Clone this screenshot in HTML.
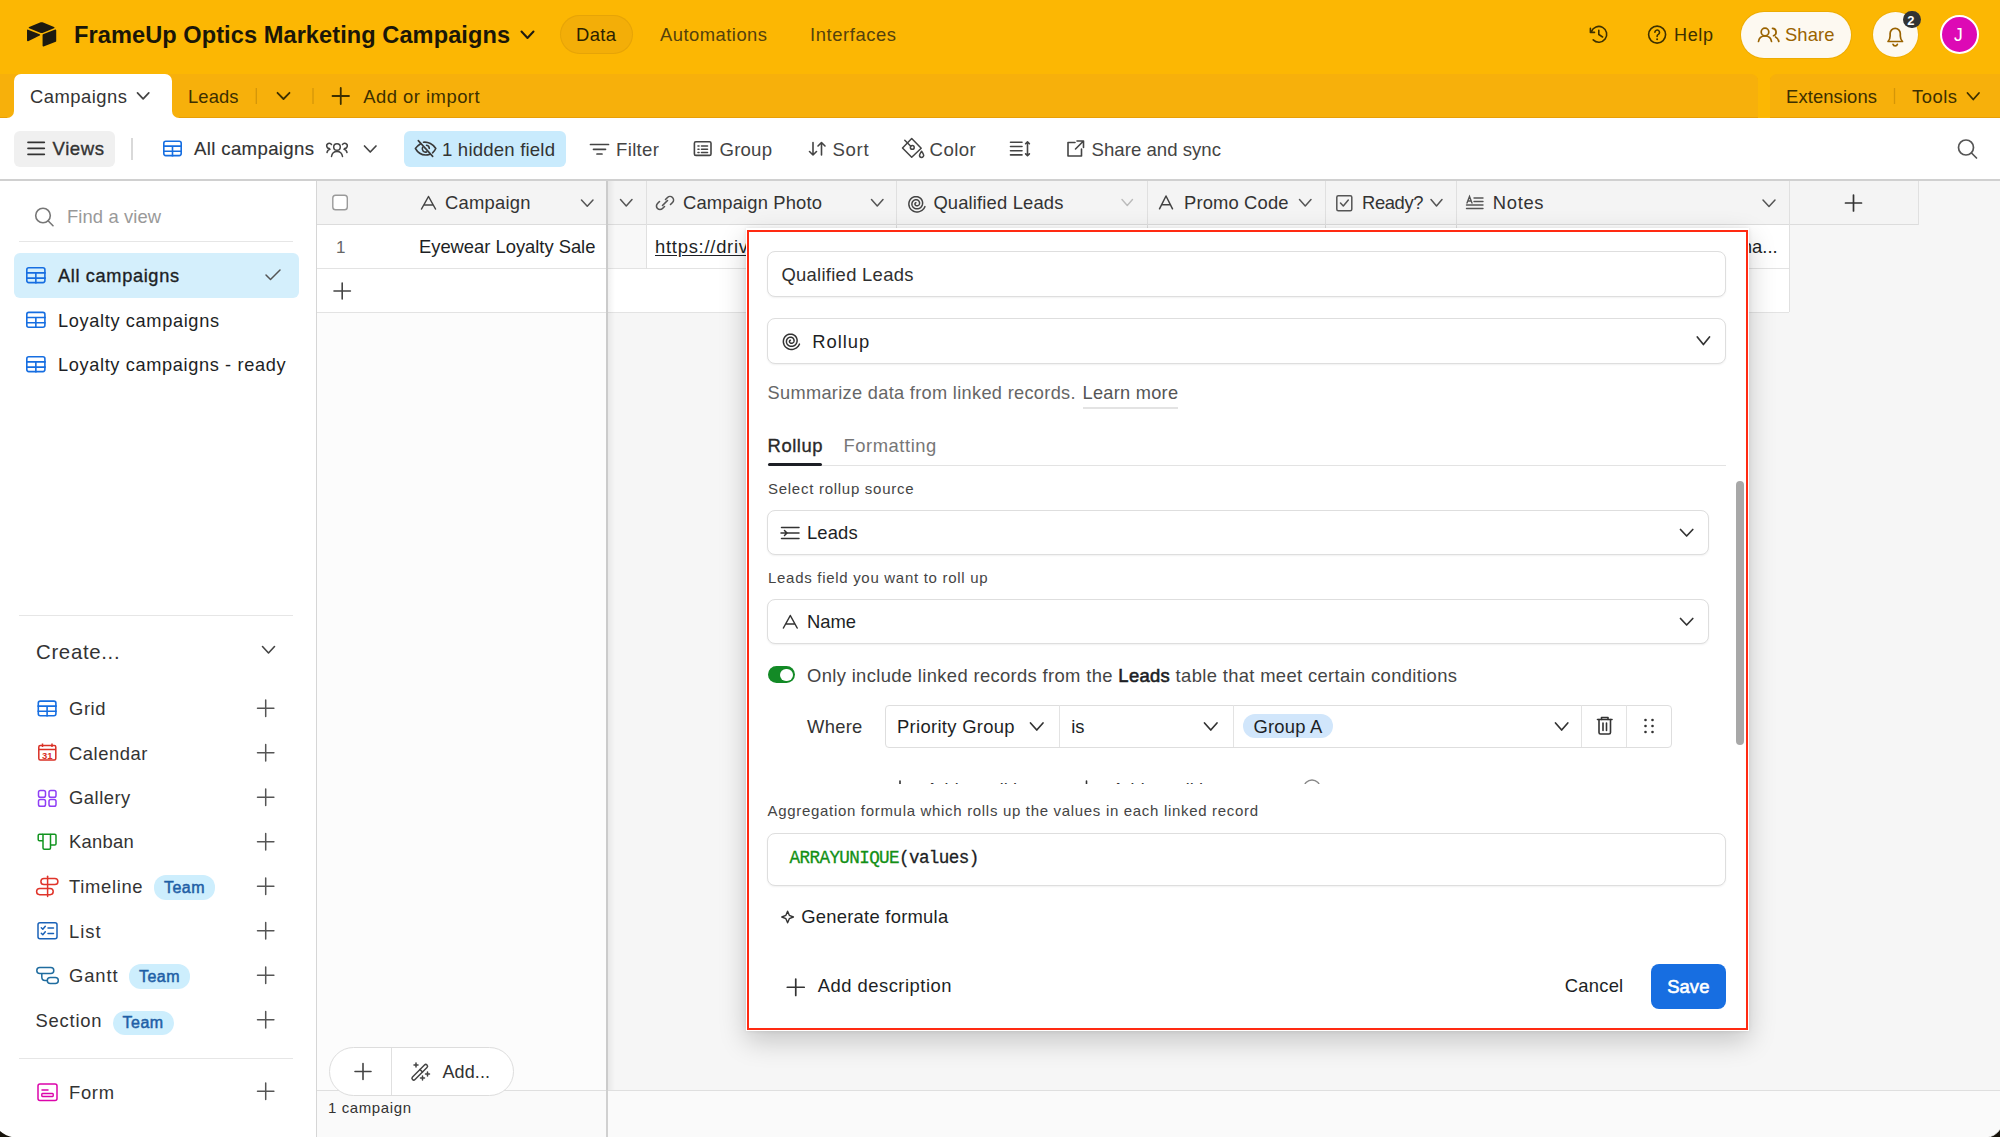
<!DOCTYPE html>
<html><head><meta charset="utf-8">
<style>
*{box-sizing:border-box;margin:0;padding:0}
html,body{width:2000px;height:1137px;overflow:hidden;background:#fff;font-family:"Liberation Sans",sans-serif;color:#1d1f25}
.a{position:absolute;white-space:nowrap}
svg.full{position:absolute;left:0;top:0;overflow:visible}

</style></head><body>
<div class="a" style="left:0px;top:0px;width:2000px;height:118px;background:#fcb703"></div>
<div class="a" style="left:0px;top:74px;width:1758px;height:44px;background:#f7b00b;border-radius:0 7px 0 0;box-shadow:inset 0 -1px 0 rgba(200,130,0,0.35)"></div>
<div class="a" style="left:1770px;top:74px;width:230px;height:44px;background:#f7b00b;border-radius:7px 0 0 0;box-shadow:inset 0 -1px 0 rgba(200,130,0,0.35)"></div>
<div class="a" style="left:7px;top:111px;width:172px;height:7px;background:#fff"></div>
<div class="a" style="left:7px;top:104px;width:7px;height:14px;background:#f7b00b;border-radius:0 0 7px 0"></div>
<div class="a" style="left:172px;top:104px;width:7px;height:14px;background:#f7b00b;border-radius:0 0 0 7px"></div>
<div class="a" style="left:14px;top:74px;width:158px;height:44px;background:#fff;border-radius:7px 7px 0 0"></div>
<div class="a" style="left:560px;top:15px;width:72.6px;height:38.6px;background:#f3ae08;border-radius:20px;box-shadow:inset 0 0 0 1px rgba(120,80,0,0.1)"></div>
<div class="a" style="left:0px;top:118px;width:2000px;height:62px;background:#fff"></div>
<div class="a" style="left:14px;top:131px;width:101px;height:35.5px;background:#f0f0f0;border-radius:6px"></div>
<div class="a" style="left:131px;top:138px;width:1.5px;height:22px;background:#d9d9d9"></div>
<div class="a" style="left:403.5px;top:130.6px;width:162.5px;height:36px;background:#c9ebfd;border-radius:6px"></div>
<div class="a" style="left:0px;top:179px;width:2000px;height:2px;background:#d0d0d0"></div>
<div class="a" style="left:0px;top:181px;width:316px;height:956px;background:#fff"></div>
<div class="a" style="left:316px;top:181px;width:1.2px;height:956px;background:#d6d6d6"></div>
<div class="a" style="left:19px;top:240.5px;width:274px;height:1.5px;background:#e6e6e6"></div>
<div class="a" style="left:14px;top:253px;width:285px;height:44.5px;background:#d4effc;border-radius:6px"></div>
<div class="a" style="left:19px;top:614.5px;width:274px;height:1.5px;background:#e6e6e6"></div>
<div class="a" style="left:19px;top:1057.8px;width:274px;height:1.5px;background:#e6e6e6"></div>
<div class="a" style="left:154px;top:875px;width:61.19999999999999px;height:24.5px;background:#cdeefd;border-radius:12px"></div>
<div class="a" style="left:129px;top:964px;width:61px;height:24.700000000000045px;background:#cdeefd;border-radius:12px"></div>
<div class="a" style="left:112.6px;top:1010.7px;width:61.400000000000006px;height:24.299999999999955px;background:#cdeefd;border-radius:12px"></div>
<div class="a" style="left:317px;top:181px;width:1683px;height:909px;background:#f6f6f6"></div>
<div class="a" style="left:317px;top:1090px;width:1683px;height:47px;background:#fafafa"></div>
<div class="a" style="left:317px;top:1089.5px;width:1683px;height:1.5px;background:#dfdfdf"></div>
<div class="a" style="left:317px;top:181px;width:1601px;height:43px;background:#f4f4f4"></div>
<div class="a" style="left:317px;top:224px;width:1601px;height:1.2px;background:#dcdcdc"></div>
<div class="a" style="left:317px;top:225px;width:1472px;height:87px;background:#fff"></div>
<div class="a" style="left:317px;top:312px;width:290px;height:778px;background:#fcfcfc"></div>
<div class="a" style="left:608px;top:225px;width:38px;height:44px;background:#f8f8f8"></div>
<div class="a" style="left:317px;top:268.3px;width:1472px;height:1.2px;background:#e3e3e3"></div>
<div class="a" style="left:317px;top:311.5px;width:1472px;height:1.2px;background:#e3e3e3"></div>
<div class="a" style="left:646px;top:181px;width:1.2px;height:88px;background:#e0e0e0"></div>
<div class="a" style="left:896px;top:181px;width:1.2px;height:88px;background:#e0e0e0"></div>
<div class="a" style="left:1147px;top:181px;width:1.2px;height:88px;background:#e0e0e0"></div>
<div class="a" style="left:1325px;top:181px;width:1.2px;height:88px;background:#e0e0e0"></div>
<div class="a" style="left:1456px;top:181px;width:1.2px;height:88px;background:#e0e0e0"></div>
<div class="a" style="left:1788.5px;top:181px;width:1.2px;height:131px;background:#e0e0e0"></div>
<div class="a" style="left:1917.5px;top:181px;width:1.2px;height:44px;background:#e0e0e0"></div>
<div class="a" style="left:606.2px;top:181px;width:1.8px;height:909px;background:#cbcbcb"></div>
<div class="a" style="left:608px;top:181px;width:7px;height:909px;background:linear-gradient(90deg,rgba(0,0,0,0.06),rgba(0,0,0,0))"></div>
<div class="a" style="left:606.2px;top:1090px;width:1.8px;height:47px;background:#d0d0d0"></div>
<div class="a" style="left:329px;top:1047px;width:184.6px;height:48.6px;background:#fff;border:1.5px solid #dddddd;border-radius:25px"></div>
<div class="a" style="left:391px;top:1048px;width:1.2px;height:46.6px;background:#e0e0e0"></div>
<div class="a" style="left:1741px;top:12px;width:110px;height:45.5px;background:#fdf9f1;border-radius:23px;box-shadow:0 0 0 1px rgba(0,0,0,0.06)"></div>
<div class="a" style="left:1873px;top:12.3px;width:45px;height:45px;background:#fdf9f1;border-radius:50%;box-shadow:0 0 0 1px rgba(0,0,0,0.05)"></div>
<div class="a" style="left:1903.2px;top:10.7px;width:17.6px;height:17.6px;background:#333;border-radius:50%"></div>
<div class="a" style="left:1939.8px;top:14.8px;width:39.4px;height:39.4px;background:#dd09b5;border-radius:50%;border:2px solid #fff"></div>
<div id="t0" class="a" style="left:74.00px;top:23.64px;font-size:23.6px;line-height:23.6px;color:#1a1608;font-weight:700;font-family:'Liberation Sans',sans-serif;letter-spacing:0.062px;">FrameUp Optics Marketing Campaigns</div>
<div id="t1" class="a" style="left:576.00px;top:26.06px;font-size:18.4px;line-height:18.4px;color:#2b2100;font-weight:400;font-family:'Liberation Sans',sans-serif;letter-spacing:0.380px;">Data</div>
<div id="t2" class="a" style="left:660.00px;top:26.06px;font-size:18.4px;line-height:18.4px;color:#54410c;font-weight:400;font-family:'Liberation Sans',sans-serif;letter-spacing:0.477px;">Automations</div>
<div id="t3" class="a" style="left:810.00px;top:26.06px;font-size:18.4px;line-height:18.4px;color:#54410c;font-weight:400;font-family:'Liberation Sans',sans-serif;letter-spacing:0.582px;">Interfaces</div>
<div id="t4" class="a" style="left:1674.00px;top:26.40px;font-size:18px;line-height:18px;color:#3d3000;font-weight:400;font-family:'Liberation Sans',sans-serif;letter-spacing:0.656px;">Help</div>
<div id="t5" class="a" style="left:1785.00px;top:26.06px;font-size:18.4px;line-height:18.4px;color:#9a6300;font-weight:400;font-family:'Liberation Sans',sans-serif;letter-spacing:0.080px;">Share</div>
<div id="t6" class="a" style="left:30.00px;top:88.06px;font-size:18.4px;line-height:18.4px;color:#333;font-weight:400;font-family:'Liberation Sans',sans-serif;letter-spacing:0.496px;">Campaigns</div>
<div id="t7" class="a" style="left:188.00px;top:88.06px;font-size:18.4px;line-height:18.4px;color:#3d2f00;font-weight:400;font-family:'Liberation Sans',sans-serif;letter-spacing:0.098px;">Leads</div>
<div id="t8" class="a" style="left:363.30px;top:88.06px;font-size:18.4px;line-height:18.4px;color:#3d2f00;font-weight:400;font-family:'Liberation Sans',sans-serif;letter-spacing:0.492px;">Add or import</div>
<div id="t9" class="a" style="left:1786.00px;top:87.56px;font-size:18.4px;line-height:18.4px;color:#3d2f00;font-weight:400;font-family:'Liberation Sans',sans-serif;letter-spacing:0.115px;">Extensions</div>
<div id="t10" class="a" style="left:1912.00px;top:87.56px;font-size:18.4px;line-height:18.4px;color:#3d2f00;font-weight:400;font-family:'Liberation Sans',sans-serif;letter-spacing:0.516px;">Tools</div>
<div id="t11" class="a" style="left:52.60px;top:140.49px;font-size:18.6px;line-height:18.6px;color:#333;font-weight:400;font-family:'Liberation Sans',sans-serif;letter-spacing:0.534px;-webkit-text-stroke:0.35px currentColor">Views</div>
<div id="t12" class="a" style="left:194.00px;top:140.49px;font-size:18.6px;line-height:18.6px;color:#333;font-weight:400;font-family:'Liberation Sans',sans-serif;letter-spacing:0.354px;-webkit-text-stroke:0.15px currentColor">All campaigns</div>
<div id="t13" class="a" style="left:442.00px;top:140.89px;font-size:18.6px;line-height:18.6px;color:#333;font-weight:400;font-family:'Liberation Sans',sans-serif;letter-spacing:0.183px;">1 hidden field</div>
<div id="t14" class="a" style="left:616.00px;top:140.89px;font-size:18.6px;line-height:18.6px;color:#444;font-weight:400;font-family:'Liberation Sans',sans-serif;letter-spacing:0.334px;">Filter</div>
<div id="t15" class="a" style="left:719.60px;top:140.89px;font-size:18.6px;line-height:18.6px;color:#444;font-weight:400;font-family:'Liberation Sans',sans-serif;letter-spacing:0.178px;">Group</div>
<div id="t16" class="a" style="left:832.40px;top:140.89px;font-size:18.6px;line-height:18.6px;color:#444;font-weight:400;font-family:'Liberation Sans',sans-serif;letter-spacing:0.697px;">Sort</div>
<div id="t17" class="a" style="left:929.60px;top:140.89px;font-size:18.6px;line-height:18.6px;color:#444;font-weight:400;font-family:'Liberation Sans',sans-serif;letter-spacing:0.391px;">Color</div>
<div id="t18" class="a" style="left:1091.60px;top:140.89px;font-size:18.6px;line-height:18.6px;color:#444;font-weight:400;font-family:'Liberation Sans',sans-serif;letter-spacing:0.015px;">Share and sync</div>
<div id="t19" class="a" style="left:67.00px;top:208.06px;font-size:18.4px;line-height:18.4px;color:#999;font-weight:400;font-family:'Liberation Sans',sans-serif;letter-spacing:0.098px;">Find a view</div>
<div id="t20" class="a" style="left:58.00px;top:267.23px;font-size:18.2px;line-height:18.2px;color:#1d1f25;font-weight:400;font-family:'Liberation Sans',sans-serif;letter-spacing:0.647px;-webkit-text-stroke:0.35px currentColor">All campaigns</div>
<div id="t21" class="a" style="left:58.00px;top:311.73px;font-size:18.2px;line-height:18.2px;color:#1d1f25;font-weight:400;font-family:'Liberation Sans',sans-serif;letter-spacing:0.647px;">Loyalty campaigns</div>
<div id="t22" class="a" style="left:58.00px;top:356.23px;font-size:18.2px;line-height:18.2px;color:#1d1f25;font-weight:400;font-family:'Liberation Sans',sans-serif;letter-spacing:0.633px;">Loyalty campaigns - ready</div>
<div id="t23" class="a" style="left:36.00px;top:642.36px;font-size:20.4px;line-height:20.4px;color:#333;font-weight:400;font-family:'Liberation Sans',sans-serif;letter-spacing:0.675px;">Create...</div>
<div id="t24" class="a" style="left:69.00px;top:700.06px;font-size:18.4px;line-height:18.4px;color:#333;font-weight:400;font-family:'Liberation Sans',sans-serif;letter-spacing:0.583px;">Grid</div>
<div id="t25" class="a" style="left:69.00px;top:744.76px;font-size:18.4px;line-height:18.4px;color:#333;font-weight:400;font-family:'Liberation Sans',sans-serif;letter-spacing:0.551px;">Calendar</div>
<div id="t26" class="a" style="left:69.00px;top:789.06px;font-size:18.4px;line-height:18.4px;color:#333;font-weight:400;font-family:'Liberation Sans',sans-serif;letter-spacing:0.506px;">Gallery</div>
<div id="t27" class="a" style="left:69.00px;top:833.46px;font-size:18.4px;line-height:18.4px;color:#333;font-weight:400;font-family:'Liberation Sans',sans-serif;letter-spacing:0.256px;">Kanban</div>
<div id="t28" class="a" style="left:69.00px;top:878.06px;font-size:18.4px;line-height:18.4px;color:#333;font-weight:400;font-family:'Liberation Sans',sans-serif;letter-spacing:0.684px;">Timeline</div>
<div id="t29" class="a" style="left:69.00px;top:922.66px;font-size:18.4px;line-height:18.4px;color:#333;font-weight:400;font-family:'Liberation Sans',sans-serif;letter-spacing:0.958px;">List</div>
<div id="t30" class="a" style="left:69.00px;top:967.06px;font-size:18.4px;line-height:18.4px;color:#333;font-weight:400;font-family:'Liberation Sans',sans-serif;letter-spacing:0.879px;">Gantt</div>
<div id="t31" class="a" style="left:69.00px;top:1084.06px;font-size:18.4px;line-height:18.4px;color:#333;font-weight:400;font-family:'Liberation Sans',sans-serif;letter-spacing:0.698px;">Form</div>
<div id="t32" class="a" style="left:35.50px;top:1012.06px;font-size:18.4px;line-height:18.4px;color:#333;font-weight:400;font-family:'Liberation Sans',sans-serif;letter-spacing:0.776px;">Section</div>
<div id="t33" class="a" style="left:164.00px;top:880.10px;font-size:16px;line-height:16px;color:#1f5fa6;font-weight:400;font-family:'Liberation Sans',sans-serif;letter-spacing:0.458px;-webkit-text-stroke:0.5px currentColor">Team</div>
<div id="t34" class="a" style="left:139.00px;top:969.10px;font-size:16px;line-height:16px;color:#1f5fa6;font-weight:400;font-family:'Liberation Sans',sans-serif;letter-spacing:0.458px;-webkit-text-stroke:0.5px currentColor">Team</div>
<div id="t35" class="a" style="left:122.60px;top:1014.60px;font-size:16px;line-height:16px;color:#1f5fa6;font-weight:400;font-family:'Liberation Sans',sans-serif;letter-spacing:0.458px;-webkit-text-stroke:0.5px currentColor">Team</div>
<div id="t36" class="a" style="left:445.00px;top:193.86px;font-size:18.4px;line-height:18.4px;color:#333;font-weight:400;font-family:'Liberation Sans',sans-serif;letter-spacing:0.225px;">Campaign</div>
<div id="t37" class="a" style="left:683.00px;top:194.06px;font-size:18.4px;line-height:18.4px;color:#333;font-weight:400;font-family:'Liberation Sans',sans-serif;letter-spacing:0.154px;">Campaign Photo</div>
<div id="t38" class="a" style="left:933.40px;top:194.06px;font-size:18.4px;line-height:18.4px;color:#333;font-weight:400;font-family:'Liberation Sans',sans-serif;letter-spacing:0.156px;">Qualified Leads</div>
<div id="t39" class="a" style="left:1184.00px;top:194.06px;font-size:18.4px;line-height:18.4px;color:#333;font-weight:400;font-family:'Liberation Sans',sans-serif;letter-spacing:0.139px;">Promo Code</div>
<div id="t40" class="a" style="left:1362.00px;top:194.06px;font-size:18.4px;line-height:18.4px;color:#333;font-weight:400;font-family:'Liberation Sans',sans-serif;letter-spacing:-0.378px;">Ready?</div>
<div id="t41" class="a" style="left:1492.80px;top:194.06px;font-size:18.4px;line-height:18.4px;color:#333;font-weight:400;font-family:'Liberation Sans',sans-serif;letter-spacing:0.663px;">Notes</div>
<div id="t42" class="a" style="left:336.00px;top:239.25px;font-size:17px;line-height:17px;color:#666;font-weight:400;font-family:'Liberation Sans',sans-serif;">1</div>
<div id="t43" class="a" style="left:419.00px;top:238.06px;font-size:18.4px;line-height:18.4px;color:#1d1f25;font-weight:400;font-family:'Liberation Sans',sans-serif;letter-spacing:-0.024px;">Eyewear Loyalty Sale</div>
<div id="t44" class="a" style="left:655.00px;top:238.06px;font-size:18.4px;line-height:18.4px;color:#1d1f25;font-weight:400;font-family:'Liberation Sans',sans-serif;letter-spacing:0.741px;text-decoration:underline;text-underline-offset:2px">https://driv</div>
<div id="t45" class="a" style="left:1736.80px;top:237.56px;font-size:18.4px;line-height:18.4px;color:#1d1f25;font-weight:400;font-family:'Liberation Sans',sans-serif;">ma...</div>
<div id="t46" class="a" style="left:442.50px;top:1063.40px;font-size:18px;line-height:18px;color:#333;font-weight:400;font-family:'Liberation Sans',sans-serif;letter-spacing:0.094px;">Add...</div>
<div id="t47" class="a" style="left:328.00px;top:1099.95px;font-size:15px;line-height:15px;color:#333;font-weight:400;font-family:'Liberation Sans',sans-serif;letter-spacing:0.604px;">1 campaign</div>
<div id="t48" class="a" style="left:1907.20px;top:14.15px;font-size:13px;line-height:13px;color:#fff;font-weight:700;font-family:'Liberation Sans',sans-serif;">2</div>
<div id="t49" class="a" style="left:1954.00px;top:26.82px;font-size:17.5px;line-height:17.5px;color:#fff;font-weight:400;font-family:'Liberation Sans',sans-serif;">J</div>
<svg class="full" width="2000" height="1137" viewBox="0 0 2000 1137"><g transform="translate(25.2,20.4) scale(0.165)" fill="#1d1a10"><path d="M90.0389 12.3675L24.0799 39.6605C20.4119 41.1785 20.4499 46.3885 24.1409 47.8515L90.3759 74.1175C96.1959 76.4255 102.677 76.4255 108.496 74.1175L174.732 47.8515C178.422 46.3885 178.461 41.1785 174.792 39.6605L108.834 12.3675C102.819 9.8775 96.0539 9.8775 90.0389 12.3675"/><path d="M105.312 88.4608V154.077C105.312 157.198 108.459 159.335 111.361 158.185L185.166 129.538C186.851 128.87 187.956 127.241 187.956 125.428V59.8118C187.956 56.6908 184.809 54.5538 181.907 55.7038L108.102 84.3508C106.418 85.0188 105.312 86.6478 105.312 88.4608"/><path d="M88.0781 91.8464L66.1741 102.422L63.9501 103.497L17.7121 125.651C14.7811 127.065 11.0401 124.929 11.0401 121.673V60.0831C11.0401 58.9051 11.6441 57.8881 12.4541 57.1221C12.7921 56.7831 13.1751 56.5041 13.5731 56.2821C14.6781 55.6191 16.2541 55.4421 17.5941 55.9721L87.7101 83.7531C91.2741 85.1671 91.5541 90.1661 88.0781 91.8464"/></g><path d="M521.5 31.5L527.5 38L533.5 31.5" fill="none" stroke="#1d1a10" stroke-width="2" stroke-linecap="round" stroke-linejoin="round"/><g fill="none" stroke="#3d3000" stroke-width="1.6" stroke-linecap="round" stroke-linejoin="round"><path d="M1591.4 31.6A7.9 7.9 0 1 1 1593.2 39.9"/><path d="M1590.4 28.4V32.4H1594.5"/><path d="M1598.8 30.3V34.5L1602.6 37"/></g><g fill="none" stroke="#3d3000" stroke-width="1.6" stroke-linecap="round"><circle cx="1657.1" cy="34.6" r="8.5"/><path d="M1654.9 32.3A2.3 2.3 0 1 1 1658.3 34.4C1657.5 34.8 1657.1 35.3 1657.1 36.4"/></g><circle cx="1657.1" cy="39.2" r="1" fill="#3d3000"/><g fill="none" stroke="#9a6300" stroke-width="1.7" stroke-linecap="round" stroke-linejoin="round"><circle cx="1765" cy="32" r="3.8"/><path d="M1758.5 41.5C1759 37.8 1761.5 36 1765 36S1771 37.8 1771.5 41.5"/><path d="M1772.5 28.3A3.8 3.8 0 0 1 1773.5 35.7"/><path d="M1775.5 37C1777.5 38 1778.5 39.5 1778.8 41.5"/></g><g fill="none" stroke="#9a6300" stroke-width="1.7" stroke-linecap="round" stroke-linejoin="round"><path d="M1888 41.5H1902.5C1901 40 1900.3 38.5 1900.3 36V33.5A5.1 5.1 0 0 0 1890.1 33.5V36C1890.1 38.5 1889.5 40 1888 41.5Z"/><path d="M1893 44.3A2.3 2.3 0 0 0 1897.4 44.3"/></g><path d="M137.5 92.8L143.15 98.8L148.8 92.8" fill="none" stroke="#444" stroke-width="1.7" stroke-linecap="round" stroke-linejoin="round"/><path d="M256.3 88V104" stroke="rgba(90,60,0,0.22)" stroke-width="1.3"/><path d="M277.5 92.8L283.5 99L289.5 92.8" fill="none" stroke="#3d2f00" stroke-width="1.8" stroke-linecap="round" stroke-linejoin="round"/><path d="M313 88V104" stroke="rgba(90,60,0,0.22)" stroke-width="1.3"/><path d="M332.5 96.0H349M340.75 88V104" fill="none" stroke="#3d2f00" stroke-width="1.8" stroke-linecap="round"/><path d="M1894.5 88V104" stroke="rgba(90,60,0,0.22)" stroke-width="1.3"/><path d="M1967.5 93L1973.25 99.5L1979 93" fill="none" stroke="#3d2f00" stroke-width="1.8" stroke-linecap="round" stroke-linejoin="round"/><path d="M28 142.3H44.3M28 148.3H44.3M28 154.3H44.3" stroke="#333" stroke-width="1.7" stroke-linecap="round"/><g fill="none" stroke="#166ee1" stroke-width="1.6"><rect x="163.8" y="141.20000000000002" width="17.4" height="14.4" rx="2"/><path d="M163 146.16H182M163 151.28H182M172.5 146.16V156.4"/></g><g fill="none" stroke="#444" stroke-width="1.5" stroke-linecap="round" stroke-linejoin="round"><circle cx="337" cy="147" r="3.3"/><path d="M331.5 156.5C332 153 334 151.5 337 151.5S342 153 342.5 156.5"/><path d="M331.5 144.5A2.6 2.6 0 1 0 329.5 148.5M327 152.5C327.5 150.5 328.5 149.5 330 149.3"/><path d="M342.5 144.5A2.6 2.6 0 1 1 344.5 148.5M347 152.5C346.5 150.5 345.5 149.5 344 149.3"/></g><path d="M364.5 146L370.25 152L376 146" fill="none" stroke="#444" stroke-width="1.7" stroke-linecap="round" stroke-linejoin="round"/><g fill="none" stroke="#3a3a3a" stroke-width="1.6" stroke-linecap="round" stroke-linejoin="round"><path d="M423.5 142.2C428 141.6 433.3 144.3 435.8 148.5C435.1 150 434 151.5 432.6 152.8"/><path d="M420.6 143.7C418.5 145 416.6 146.8 415.4 148.5C418 153 421.5 155 425.5 155C427 155 428.7 154.7 430 154.2"/><path d="M426.6 145.3A3.2 3.2 0 0 1 429.3 148.4"/><path d="M422.6 147.3A3.3 3.3 0 0 0 426.6 151.9"/><path d="M418.3 140.6L432.7 156.4"/></g><path d="M590.5 144.5H608.5M593.5 149.3H605.5M597 154H602" stroke="#444" stroke-width="1.7" stroke-linecap="round"/><g fill="none" stroke="#444" stroke-width="1.6" stroke-linecap="round"><rect x="694.4" y="141.8" width="16.6" height="13.6" rx="1.5"/><path d="M698 146H699M701.5 146H707.5M698 149.3H699M701.5 149.3H707.5M698 152.5H699M701.5 152.5H707.5"/></g><g fill="none" stroke="#444" stroke-width="1.6" stroke-linecap="round" stroke-linejoin="round"><path d="M813 142.5V155M809.5 151.5L813 155L816.5 151.5"/><path d="M821.5 155V142.5M818 146L821.5 142.5L825 146"/></g><g fill="none" stroke="#444" stroke-width="1.5" stroke-linecap="round" stroke-linejoin="round"><path d="M911.7 138.6L921.2 148.3L911.7 157.3L902.5 148Z"/><path d="M904.8 140.2L910.8 146.2"/><circle cx="912.3" cy="147.4" r="1.9"/><path d="M921.6 151.3C920.2 153.3 919.5 154.3 919.5 155.3A2.1 2.1 0 0 0 923.7 155.3C923.7 154.3 923 153.3 921.6 151.3Z"/></g><g fill="none" stroke="#444" stroke-width="1.6" stroke-linecap="round" stroke-linejoin="round"><path d="M1010.5 142.3H1022M1010.5 146.5H1022M1010.5 150.7H1022M1010.5 154.9H1022"/><path d="M1027.5 141.8V155.8M1025.6 143.7L1027.5 141.8L1029.4 143.7M1025.6 153.9L1027.5 155.8L1029.4 153.9"/></g><g fill="none" stroke="#444" stroke-width="1.6" stroke-linecap="round" stroke-linejoin="round"><path d="M1075 142.5H1068V156H1081.5V149"/><path d="M1077 141H1083.5V147.5M1083.5 141L1075.5 149"/></g><g fill="none" stroke="#555" stroke-width="1.7" stroke-linecap="round"><circle cx="1966" cy="147.5" r="7.5"/><path d="M1971.5 153L1976.5 158"/></g><g fill="none" stroke="#777" stroke-width="1.6" stroke-linecap="round"><circle cx="43" cy="215.5" r="7.3"/><path d="M48.3 221L53 225.7"/></g><g fill="none" stroke="#166ee1" stroke-width="1.6"><rect x="26.8" y="267.8" width="18.1" height="14.799999999999978" rx="2"/><path d="M26 272.904H45.7M26 278.152H45.7M35.85 272.904V283.4"/></g><g fill="none" stroke="#166ee1" stroke-width="1.6"><rect x="26.8" y="312.40000000000003" width="18.1" height="14.799999999999978" rx="2"/><path d="M26 317.504H45.7M26 322.752H45.7M35.85 317.504V328.0"/></g><g fill="none" stroke="#166ee1" stroke-width="1.6"><rect x="26.8" y="356.8" width="18.1" height="14.799999999999978" rx="2"/><path d="M26 361.904H45.7M26 367.152H45.7M35.85 361.904V372.4"/></g><path d="M266 275L270.5 279.5L280 270" fill="none" stroke="#555" stroke-width="1.5" stroke-linecap="round" stroke-linejoin="round"/><path d="M262.5 646.5L268.5 653L274.5 646.5" fill="none" stroke="#444" stroke-width="1.6" stroke-linecap="round" stroke-linejoin="round"/><g fill="none" stroke="#166ee1" stroke-width="1.6"><rect x="38.3" y="701.0999999999999" width="17.6" height="14.600000000000046" rx="2"/><path d="M37.5 706.132H56.7M37.5 711.316H56.7M47.1 706.132V716.5"/></g><g fill="none" stroke="#d93025" stroke-width="1.5"><rect x="38.8" y="745.5" width="17" height="14.5" rx="1.5"/><path d="M38.8 749.5H55.8M42.5 743.5V747M52 743.5V747"/></g><text x="47.3" y="758.8" font-family="Liberation Sans" font-weight="700" font-size="9.5" fill="#d93025" text-anchor="middle">31</text><g fill="none" stroke="#8f3ff5" stroke-width="1.5"><rect x="38.5" y="790.5" width="7" height="6.8" rx="1.8"/><rect x="49" y="790.5" width="7" height="6.8" rx="1.8"/><rect x="38.5" y="799.5" width="7" height="6.8" rx="1.8"/><rect x="49" y="799.5" width="7" height="6.8" rx="1.8"/></g><g fill="none" stroke="#11941f" stroke-width="1.5" stroke-linejoin="round"><path d="M43 834.3H39.5C38.7 834.3 38.2 834.8 38.2 835.6V839.5C38.2 840.3 38.7 840.8 39.5 840.8H43"/><path d="M43 834.3V848C43 848.8 43.5 849.2 44.3 849.2H49.3C50.1 849.2 50.5 848.8 50.5 848V834.3Z"/><path d="M50.5 834.3H54.7C55.5 834.3 56 834.8 56 835.6V843.7C56 844.5 55.5 845 54.7 845H50.5"/></g><g fill="none" stroke="#e0342a" stroke-width="1.5" stroke-linecap="round" stroke-linejoin="round"><rect x="40.9" y="878.4" width="17" height="6.2" rx="3.1"/><rect x="36.6" y="888.4" width="16.6" height="6.3" rx="3.1"/><path d="M47.6 876.2V896.6"/></g><g fill="none" stroke="#1a62b8" stroke-width="1.5" stroke-linecap="round" stroke-linejoin="round"><rect x="38" y="922.8" width="19" height="16" rx="2"/><path d="M41.3 927.8L42.8 929.3L45.3 926.3M41.3 933.3L42.8 934.8L45.3 931.8M48 928H53.5M48 933.5H53.5"/></g><g fill="none" stroke="#1f6c9f" stroke-width="1.5" stroke-linejoin="round"><rect x="36.8" y="967.4" width="17" height="6.2" rx="3"/><rect x="47.3" y="977.4" width="11" height="6.2" rx="3"/><path d="M41.8 973.6V977C41.8 979 43 980.5 45 980.5H47.3"/></g><g fill="none" stroke="#dc05aa" stroke-width="1.5" stroke-linecap="round"><rect x="38" y="1084" width="19" height="16.5" rx="2"/><path d="M42 1090H48M42.5 1093.5H52.5C53.5 1093.5 53.5 1096.5 52.5 1096.5H42.5C41.5 1096.5 41.5 1093.5 42.5 1093.5Z"/></g><path d="M257.5 708.2H273.9M265.7 700V716.4" fill="none" stroke="#555" stroke-width="1.5" stroke-linecap="round"/><path d="M257.5 752.7H273.9M265.7 744.5V760.9" fill="none" stroke="#555" stroke-width="1.5" stroke-linecap="round"/><path d="M257.5 797.2H273.9M265.7 789V805.4" fill="none" stroke="#555" stroke-width="1.5" stroke-linecap="round"/><path d="M257.5 841.7H273.9M265.7 833.5V849.9" fill="none" stroke="#555" stroke-width="1.5" stroke-linecap="round"/><path d="M257.5 886.2H273.9M265.7 878V894.4" fill="none" stroke="#555" stroke-width="1.5" stroke-linecap="round"/><path d="M257.5 930.7H273.9M265.7 922.5V938.9" fill="none" stroke="#555" stroke-width="1.5" stroke-linecap="round"/><path d="M257.5 975.2H273.9M265.7 967V983.4" fill="none" stroke="#555" stroke-width="1.5" stroke-linecap="round"/><path d="M257.5 1019.7H273.9M265.7 1011.5V1027.9" fill="none" stroke="#555" stroke-width="1.5" stroke-linecap="round"/><path d="M257.5 1091.2H273.9M265.7 1083V1099.4" fill="none" stroke="#555" stroke-width="1.5" stroke-linecap="round"/><rect x="332.8" y="195.3" width="14.5" height="14.5" rx="2.8" fill="#fff" stroke="#9a9a9a" stroke-width="1.4"/><path d="M421.5 209L428.5 196.5L435.5 209M424.3 205.0H432.7" fill="none" stroke="#444" stroke-width="1.5" stroke-linecap="round" stroke-linejoin="round"/><path d="M581.5 200L587.25 206.3L593 200" fill="none" stroke="#555" stroke-width="1.5" stroke-linecap="round" stroke-linejoin="round"/><path d="M620.5 199.6L626.25 206L632 199.6" fill="none" stroke="#555" stroke-width="1.5" stroke-linecap="round" stroke-linejoin="round"/><g fill="none" stroke="#555" stroke-width="1.6" stroke-linecap="round"><path d="M665.5 199.5L667.5 197.5A3.5 3.5 0 0 1 672.5 202.5L670.5 204.5"/><path d="M664.5 206.5L662.5 208.5A3.5 3.5 0 0 1 657.5 203.5L659.5 201.5"/><path d="M662.5 205.5L667.5 200.5"/></g><path d="M871.5 199.5L877.25 206L883 199.5" fill="none" stroke="#555" stroke-width="1.5" stroke-linecap="round" stroke-linejoin="round"/><path d="M915.94 202.67 L915.79 202.70 L915.64 202.77 L915.49 202.85 L915.35 202.97 L915.22 203.11 L915.12 203.28 L915.03 203.46 L914.98 203.67 L914.95 203.89 L914.95 204.12 L915.00 204.36 L915.07 204.60 L915.19 204.83 L915.34 205.05 L915.53 205.25 L915.75 205.43 L916.01 205.58 L916.29 205.69 L916.59 205.76 L916.91 205.80 L917.23 205.79 L917.57 205.72 L917.89 205.61 L918.21 205.46 L918.51 205.25 L918.79 205.00 L919.03 204.70 L919.23 204.37 L919.39 204.00 L919.50 203.60 L919.55 203.19 L919.55 202.76 L919.48 202.33 L919.35 201.91 L919.16 201.49 L918.91 201.10 L918.61 200.75 L918.25 200.43 L917.84 200.16 L917.39 199.94 L916.90 199.79 L916.39 199.70 L915.87 199.69 L915.34 199.74 L914.81 199.87 L914.30 200.08 L913.81 200.36 L913.36 200.71 L912.95 201.13 L912.61 201.60 L912.32 202.13 L912.11 202.69 L911.97 203.29 L911.92 203.92 L911.95 204.55 L912.08 205.18 L912.29 205.80 L912.58 206.39 L912.96 206.94 L913.42 207.44 L913.95 207.88 L914.54 208.25 L915.19 208.53 L915.88 208.73 L916.59 208.83 L917.33 208.84 L918.06 208.74 L918.79 208.54 L919.48 208.24 L920.14 207.84 L920.75 207.35 L921.29 206.78 L921.75 206.13 L922.12 205.41 L922.39 204.64 L922.56 203.84 L922.61 203.01 L922.56 202.17 L922.38 201.34 L922.09 200.53 L921.69 199.76 L921.18 199.04 L920.58 198.39 L919.88 197.83 L919.10 197.36 L918.27 197.00 L917.38 196.76 L916.45 196.63 L915.51 196.64 L914.57 196.77 L913.65 197.03 L912.76 197.42 L911.93 197.94 L911.17 198.56 L910.49 199.29 L909.92 200.12 L909.46 201.02 L909.12 201.99 L908.92 203.00 L908.85 204.03 L908.93 205.08 L909.15 206.12 L909.52 207.12 L910.02 208.07 L910.65 208.96 L911.40 209.75 L912.26 210.44 L913.22 211.01 L914.25 211.45 L915.34 211.75 L916.47 211.90 L917.62 211.89 L918.77 211.73 L919.89 211.40 L920.96 210.93 L921.97 210.31 L922.89 209.55 L923.71 208.66 L924.40 207.67 L924.96 206.58" fill="none" stroke="#444" stroke-width="1.5" stroke-linecap="round"/><path d="M1122 199.5L1127.25 205.5L1132.5 199.5" fill="none" stroke="#bbb" stroke-width="1.4" stroke-linecap="round" stroke-linejoin="round"/><path d="M1159.5 208.8L1166.0 196L1172.5 208.8M1162.1 204.704H1169.9" fill="none" stroke="#444" stroke-width="1.5" stroke-linecap="round" stroke-linejoin="round"/><path d="M1299.5 199.5L1305.25 206L1311 199.5" fill="none" stroke="#555" stroke-width="1.5" stroke-linecap="round" stroke-linejoin="round"/><g fill="none" stroke="#555" stroke-width="1.5" stroke-linecap="round" stroke-linejoin="round"><rect x="1336.8" y="195.8" width="15" height="15" rx="1.5"/><path d="M1340.5 203L1343.3 206L1348.3 200"/></g><path d="M1431 199.5L1436.5 206L1442 199.5" fill="none" stroke="#555" stroke-width="1.5" stroke-linecap="round" stroke-linejoin="round"/><g fill="none" stroke="#555" stroke-width="1.4" stroke-linecap="round"><path d="M1466.5 208.5H1483M1466.5 205H1483M1474 201.5H1483M1474 198H1483"/><path d="M1467 203L1469.5 196.5L1472 203M1468 201H1471"/></g><path d="M1763 200L1769.0 206.5L1775 200" fill="none" stroke="#555" stroke-width="1.5" stroke-linecap="round" stroke-linejoin="round"/><path d="M1845.5 203.0H1861.5M1853.5 195V211" fill="none" stroke="#333" stroke-width="1.7" stroke-linecap="round"/><path d="M334 291.0H350.4M342.2 283V299" fill="none" stroke="#444" stroke-width="1.6" stroke-linecap="round"/><path d="M355 1071.5H371M363.0 1063.5V1079.5" fill="none" stroke="#444" stroke-width="1.6" stroke-linecap="round"/><g fill="none" stroke="#444" stroke-width="1.5" stroke-linecap="round" stroke-linejoin="round"><path d="M412.5 1077L424.5 1065A1.5 1.5 0 0 1 427 1067.5L415 1079.5A1.5 1.5 0 0 1 412.5 1077Z"/><path d="M420 1069.5L422.5 1072"/><path d="M416 1063V1067M414 1065H418M427.5 1072V1076M425.5 1074H429.5M422.5 1076V1080M420.5 1078H424.5"/></g></svg>
<div class="a" style="left:745.8px;top:228.4px;width:1003.6px;height:802.6px;background:#fff;box-shadow:0 10px 26px rgba(0,0,0,0.2),0 0 4px rgba(0,0,0,0.1)"></div>
<div class="a" style="left:767px;top:251px;width:959px;height:45.5px;background:#fff;border:1.3px solid #dedede;border-radius:8px;box-shadow:0 1px 2px rgba(0,0,0,0.06)"></div>
<div class="a" style="left:767px;top:318px;width:959px;height:45.5px;background:#fff;border:1.3px solid #dedede;border-radius:8px;box-shadow:0 1px 2px rgba(0,0,0,0.06)"></div>
<div class="a" style="left:1083px;top:406.5px;width:95px;height:2px;background:#e3e3e3"></div>
<div class="a" style="left:767.5px;top:464.5px;width:958.5px;height:1.5px;background:#e3e3e3"></div>
<div class="a" style="left:767.5px;top:463px;width:54px;height:3px;background:#1d1f25;border-radius:2px"></div>
<div class="a" style="left:747.5px;top:466px;width:1000px;height:318px;overflow:hidden">
<div class="a" style="left:19.50px;top:44.20px;width:942px;height:45.00000000000006px;background:#fff;border:1.3px solid #dedede;border-radius:8px;box-shadow:0 1px 2px rgba(0,0,0,0.06)"></div><div class="a" style="left:19.50px;top:133.30px;width:942px;height:44.90000000000009px;background:#fff;border:1.3px solid #dedede;border-radius:8px;box-shadow:0 1px 2px rgba(0,0,0,0.06)"></div><div class="a" style="left:20.50px;top:200.40px;width:26.6px;height:16.8px;background:#138a26;border-radius:9px"></div><div class="a" style="left:32.80px;top:202.60px;width:12.4px;height:12.4px;background:#fff;border-radius:50%"></div><div class="a" style="left:137.90px;top:238.50px;width:786.3px;height:43px;background:#fff;border:1.3px solid #dedede;border-radius:4px"></div><div class="a" style="left:311.50px;top:239.00px;width:1.2px;height:42px;background:#e3e3e3"></div><div class="a" style="left:485.50px;top:239.00px;width:1.2px;height:42px;background:#e3e3e3"></div><div class="a" style="left:833.70px;top:239.00px;width:1.2px;height:42px;background:#e3e3e3"></div><div class="a" style="left:878.10px;top:239.00px;width:1.2px;height:42px;background:#e3e3e3"></div><div class="a" style="left:495.20px;top:247.80px;width:90.6px;height:24.7px;background:#d1e6fb;border-radius:13px"></div><div class="a" style="left:988.00px;top:15.20px;width:8px;height:264px;background:#a8a8a8;border-radius:4px"></div>
<div id="t50" class="a" style="left:20.50px;top:14.85px;font-size:15px;line-height:15px;color:#444;font-weight:400;font-family:'Liberation Sans',sans-serif;letter-spacing:0.725px;">Select rollup source</div>
<div id="t51" class="a" style="left:59.50px;top:58.36px;font-size:18.4px;line-height:18.4px;color:#1d1f25;font-weight:400;font-family:'Liberation Sans',sans-serif;letter-spacing:0.123px;">Leads</div>
<div id="t52" class="a" style="left:20.50px;top:103.95px;font-size:15px;line-height:15px;color:#444;font-weight:400;font-family:'Liberation Sans',sans-serif;letter-spacing:0.704px;">Leads field you want to roll up</div>
<div id="t53" class="a" style="left:59.50px;top:147.46px;font-size:18.4px;line-height:18.4px;color:#1d1f25;font-weight:400;font-family:'Liberation Sans',sans-serif;letter-spacing:-0.021px;">Name</div>
<div id="t54" class="a" style="left:59.50px;top:200.86px;font-size:18.4px;line-height:18.4px;color:#444;font-weight:400;font-family:'Liberation Sans',sans-serif;letter-spacing:0.347px;">Only include linked records from the <span style="-webkit-text-stroke:0.6px currentColor;color:#1d1f25">Leads</span> table that meet certain conditions</div>
<div id="t55" class="a" style="left:59.50px;top:252.06px;font-size:18.4px;line-height:18.4px;color:#333;font-weight:400;font-family:'Liberation Sans',sans-serif;letter-spacing:0.282px;">Where</div>
<div id="t56" class="a" style="left:149.50px;top:252.06px;font-size:18.4px;line-height:18.4px;color:#1d1f25;font-weight:400;font-family:'Liberation Sans',sans-serif;letter-spacing:0.311px;">Priority Group</div>
<div id="t57" class="a" style="left:323.70px;top:252.06px;font-size:18.4px;line-height:18.4px;color:#1d1f25;font-weight:400;font-family:'Liberation Sans',sans-serif;">is</div>
<div id="t58" class="a" style="left:505.90px;top:252.06px;font-size:18.4px;line-height:18.4px;color:#1d1f25;font-weight:400;font-family:'Liberation Sans',sans-serif;letter-spacing:0.253px;">Group A</div>
<div id="t59" class="a" style="left:178.50px;top:314.56px;font-size:18.4px;line-height:18.4px;color:#333;font-weight:400;font-family:'Liberation Sans',sans-serif;">Add condition</div>
<div id="t60" class="a" style="left:364.50px;top:314.56px;font-size:18.4px;line-height:18.4px;color:#333;font-weight:400;font-family:'Liberation Sans',sans-serif;">Add condition group</div>
<svg class="full" width="2000" height="1137" viewBox="0 0 2000 1137" style="left:-747.5px;top:-466px"><g fill="none" stroke="#333" stroke-width="1.5" stroke-linecap="round" stroke-linejoin="round"><path d="M781.5 527.5H799M787 533H799M781.5 538.5H799"/><path d="M781 533H787M784.5 530.5L787 533L784.5 535.5"/></g><path d="M1680.5 529.5L1686.65 536L1692.8 529.5" fill="none" stroke="#333" stroke-width="1.7" stroke-linecap="round" stroke-linejoin="round"/><path d="M783.4 628L790.3 615.5L797.2 628M786.16 624.0H794.44" fill="none" stroke="#333" stroke-width="1.5" stroke-linecap="round" stroke-linejoin="round"/><path d="M1680.5 618.5L1686.65 625L1692.8 618.5" fill="none" stroke="#333" stroke-width="1.7" stroke-linecap="round" stroke-linejoin="round"/><path d="M1030.5 723L1036.75 730L1043 723" fill="none" stroke="#333" stroke-width="1.7" stroke-linecap="round" stroke-linejoin="round"/><path d="M1204.5 723L1210.75 730L1217 723" fill="none" stroke="#333" stroke-width="1.7" stroke-linecap="round" stroke-linejoin="round"/><path d="M1555.5 723L1561.65 730L1567.8 723" fill="none" stroke="#333" stroke-width="1.7" stroke-linecap="round" stroke-linejoin="round"/><g fill="none" stroke="#333" stroke-width="1.6" stroke-linecap="round" stroke-linejoin="round"><path d="M1597.5 719.5H1612"/><path d="M1601.5 719.5V717.5H1608V719.5"/><path d="M1599 719.5V732.5C1599 733.5 1599.5 734 1600.5 734H1609C1610 734 1610.5 733.5 1610.5 732.5V719.5"/><path d="M1603 723V730.5M1606.5 723V730.5"/></g><circle cx="1645.5" cy="720" r="1.3" fill="#333"/><circle cx="1645.5" cy="726" r="1.3" fill="#333"/><circle cx="1645.5" cy="732" r="1.3" fill="#333"/><circle cx="1652.5" cy="720" r="1.3" fill="#333"/><circle cx="1652.5" cy="726" r="1.3" fill="#333"/><circle cx="1652.5" cy="732" r="1.3" fill="#333"/><path d="M894 787.0H906M900.0 781V793" fill="none" stroke="#333" stroke-width="1.6" stroke-linecap="round"/><path d="M1080.5 787.0H1092.5M1086.5 781V793" fill="none" stroke="#333" stroke-width="1.6" stroke-linecap="round"/><circle cx="1312" cy="788" r="8" fill="none" stroke="#888" stroke-width="1.4"/></svg>
</div>
<div class="a" style="left:767px;top:833px;width:959px;height:53.299999999999955px;background:#fff;border:1.3px solid #dedede;border-radius:8px;box-shadow:0 1px 2px rgba(0,0,0,0.06)"></div>
<div id="t61" class="a" style="left:781.40px;top:266.06px;font-size:18.4px;line-height:18.4px;color:#2f2f2f;font-weight:400;font-family:'Liberation Sans',sans-serif;letter-spacing:0.299px;">Qualified Leads</div>
<div id="t62" class="a" style="left:812.20px;top:332.76px;font-size:18.4px;line-height:18.4px;color:#1d1f25;font-weight:400;font-family:'Liberation Sans',sans-serif;letter-spacing:0.972px;">Rollup</div>
<div id="t63" class="a" style="left:767.60px;top:384.23px;font-size:18.2px;line-height:18.2px;color:#666;font-weight:400;font-family:'Liberation Sans',sans-serif;letter-spacing:0.318px;">Summarize data from linked records.</div>
<div id="t64" class="a" style="left:1082.50px;top:384.23px;font-size:18.2px;line-height:18.2px;color:#555;font-weight:400;font-family:'Liberation Sans',sans-serif;letter-spacing:0.276px;">Learn more</div>
<div id="t65" class="a" style="left:767.60px;top:437.06px;font-size:18.4px;line-height:18.4px;color:#2a2a2a;font-weight:400;font-family:'Liberation Sans',sans-serif;letter-spacing:0.532px;-webkit-text-stroke:0.35px currentColor">Rollup</div>
<div id="t66" class="a" style="left:843.50px;top:437.06px;font-size:18.4px;line-height:18.4px;color:#777;font-weight:400;font-family:'Liberation Sans',sans-serif;letter-spacing:0.544px;">Formatting</div>
<div id="t67" class="a" style="left:767.60px;top:803.45px;font-size:15px;line-height:15px;color:#444;font-weight:400;font-family:'Liberation Sans',sans-serif;letter-spacing:0.684px;">Aggregation formula which rolls up the values in each linked record</div>
<div id="t68" class="a" style="left:789.60px;top:849.92px;font-size:17.6px;line-height:17.6px;color:#1d1f25;font-weight:400;font-family:'Liberation Mono',monospace;letter-spacing:-0.611px;-webkit-text-stroke:0.3px currentColor"><span style="color:#139016">ARRAYUNIQUE</span>(values)</div>
<div id="t69" class="a" style="left:801.20px;top:907.66px;font-size:18.4px;line-height:18.4px;color:#1d1f25;font-weight:400;font-family:'Liberation Sans',sans-serif;letter-spacing:0.258px;">Generate formula</div>
<div id="t70" class="a" style="left:817.70px;top:977.36px;font-size:18.4px;line-height:18.4px;color:#1d1f25;font-weight:400;font-family:'Liberation Sans',sans-serif;letter-spacing:0.501px;">Add description</div>
<div id="t71" class="a" style="left:1564.80px;top:977.46px;font-size:18.4px;line-height:18.4px;color:#1d1f25;font-weight:400;font-family:'Liberation Sans',sans-serif;letter-spacing:0.230px;">Cancel</div>
<div class="a" style="left:1651px;top:964.4px;width:74.8px;height:44.2px;background:#176ee1;border-radius:8px"></div>
<div id="t72" class="a" style="left:1667.20px;top:977.56px;font-size:18.4px;line-height:18.4px;color:#fff;font-weight:400;font-family:'Liberation Sans',sans-serif;letter-spacing:0.093px;-webkit-text-stroke:0.6px currentColor">Save</div>
<svg class="full" width="2000" height="1137" viewBox="0 0 2000 1137"><path d="M790.44 340.17 L790.29 340.20 L790.14 340.27 L789.99 340.35 L789.85 340.47 L789.72 340.61 L789.62 340.78 L789.53 340.96 L789.48 341.17 L789.45 341.39 L789.45 341.62 L789.50 341.86 L789.57 342.10 L789.69 342.33 L789.84 342.55 L790.03 342.75 L790.25 342.93 L790.51 343.08 L790.79 343.19 L791.09 343.26 L791.41 343.30 L791.73 343.29 L792.07 343.22 L792.39 343.11 L792.71 342.96 L793.01 342.75 L793.29 342.50 L793.53 342.20 L793.73 341.87 L793.89 341.50 L794.00 341.10 L794.05 340.69 L794.05 340.26 L793.98 339.83 L793.85 339.41 L793.66 338.99 L793.41 338.60 L793.11 338.25 L792.75 337.93 L792.34 337.66 L791.89 337.44 L791.40 337.29 L790.89 337.20 L790.37 337.19 L789.84 337.24 L789.31 337.37 L788.80 337.58 L788.31 337.86 L787.86 338.21 L787.45 338.63 L787.11 339.10 L786.82 339.63 L786.61 340.19 L786.47 340.79 L786.42 341.42 L786.45 342.05 L786.58 342.68 L786.79 343.30 L787.08 343.89 L787.46 344.44 L787.92 344.94 L788.45 345.38 L789.04 345.75 L789.69 346.03 L790.38 346.23 L791.09 346.33 L791.83 346.34 L792.56 346.24 L793.29 346.04 L793.98 345.74 L794.64 345.34 L795.25 344.85 L795.79 344.28 L796.25 343.63 L796.62 342.91 L796.89 342.14 L797.06 341.34 L797.11 340.51 L797.06 339.67 L796.88 338.84 L796.59 338.03 L796.19 337.26 L795.68 336.54 L795.08 335.89 L794.38 335.33 L793.60 334.86 L792.77 334.50 L791.88 334.26 L790.95 334.13 L790.01 334.14 L789.07 334.27 L788.15 334.53 L787.26 334.92 L786.43 335.44 L785.67 336.06 L784.99 336.79 L784.42 337.62 L783.96 338.52 L783.62 339.49 L783.42 340.50 L783.35 341.53 L783.43 342.58 L783.65 343.62 L784.02 344.62 L784.52 345.57 L785.15 346.46 L785.90 347.25 L786.76 347.94 L787.72 348.51 L788.75 348.95 L789.84 349.25 L790.97 349.40 L792.12 349.39 L793.27 349.23 L794.39 348.90 L795.46 348.43 L796.47 347.81 L797.39 347.05 L798.21 346.16 L798.90 345.17 L799.46 344.08" fill="none" stroke="#333" stroke-width="1.5" stroke-linecap="round"/><path d="M1697.3 337L1703.4 344.5L1709.5 337" fill="none" stroke="#333" stroke-width="1.7" stroke-linecap="round" stroke-linejoin="round"/><path d="M787.6 911.2L789.3 915.3L793.4 917L789.3 918.7L787.6 922.8L785.9 918.7L781.8 917L785.9 915.3Z" fill="none" stroke="#333" stroke-width="1.4" stroke-linejoin="round"/><path d="M787.3 987.25H804.2M795.75 979V995.5" fill="none" stroke="#333" stroke-width="1.7" stroke-linecap="round"/></svg>
<div class="a" style="left:747px;top:229.8px;width:1001.2px;height:800.0px;border:2.8px solid #ff2a12"></div>
<svg class="full" width="2000" height="1137"><path d="M0 1131A27 27 0 0 0 13.6 1137.5L0 1137.5Z" fill="#17130b"/><path d="M2000.5 1128.6A19 19 0 0 1 1985 1137.5L2000.5 1137.5Z" fill="#17130b"/><path d="M2000.5 1128.6A19 19 0 0 1 1985 1137.5" fill="none" stroke="#fff" stroke-width="0.8"/></svg>
</body></html>
